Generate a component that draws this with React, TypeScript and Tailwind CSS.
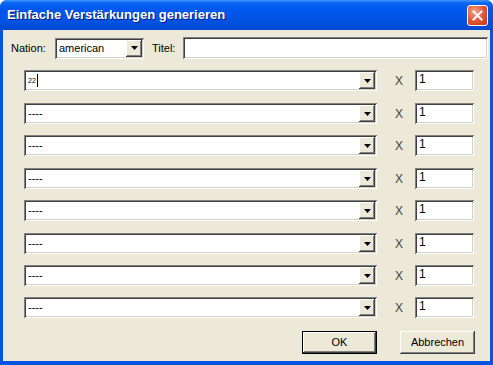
import React from 'react';

const sunken =
  'bg-white shadow-[inset_1px_1px_#808080,inset_-1px_-1px_#ffffff,inset_2px_2px_#404040,inset_-2px_-2px_#d4d0c8]';
const raised =
  'bg-[#ece9d8] shadow-[inset_-1px_-1px_#404040,inset_1px_1px_#ffffff,inset_-2px_-2px_#808080,inset_2px_2px_#ece9d8]';

// gaps between the eight rows (reference spacing is not perfectly even)
const rowGaps = ['mt-0', 'mt-[12px]', 'mt-[11px]', 'mt-[12px]', 'mt-[11px]', 'mt-[12px]', 'mt-[11px]', 'mt-[11px]'];

function Arrow() {
  return (
    <svg width="7" height="4" viewBox="0 0 7 4">
      <path d="M0 0h7L3.5 4z" fill="#000" />
    </svg>
  );
}

function Combo({ text, first, className }: { text: string; first?: boolean; className: string }) {
  return (
    <div className={`${sunken} ${className} h-[21px] flex items-center p-[2px]`}>
      <div className="flex-1 flex items-center pl-[2px] text-[11px] leading-none text-black">
        {first ? (
          <>
            <span className="text-[7px] leading-none">22</span>
            <span className="w-px h-[13px] bg-black ml-px" />
          </>
        ) : (
          <span>{text}</span>
        )}
      </div>
      <div className={`${raised} w-[16px] h-[17px] flex items-center justify-center`}>
        <Arrow />
      </div>
    </div>
  );
}

export default function App() {
  return (
    <div className="w-[493px] h-[365px] flex flex-col bg-[#0054e3] rounded-t-[7px] overflow-hidden font-['Liberation_Sans',Arial,sans-serif]">
      {/* Title bar */}
      <div className="h-[30px] shrink-0 flex items-center justify-between pl-[7px] pr-[5px] bg-[linear-gradient(#3d95ff_0px,#0a66ef_3px,#0058ee_8px,#0054e3_20px,#0048d0_30px)]">
        <span className="text-white font-bold text-[13px] [text-shadow:1px_1px_#0a1883]">
          Einfache Verstärkungen generieren
        </span>
        <div className="w-[21px] h-[21px] rounded-[3px] border border-white bg-[radial-gradient(circle_at_35%_30%,#f2a28a,#e0532d_55%,#c23a14)] flex items-center justify-center">
          <svg width="11" height="11" viewBox="0 0 11 11">
            <path d="M1.5 1.5l8 8M9.5 1.5l-8 8" stroke="#fff" strokeWidth="2" strokeLinecap="square" />
          </svg>
        </div>
      </div>

      {/* Body */}
      <div className="flex-1 mx-[3px] mb-[4px] bg-[#ece9d8] flex flex-col pr-[2px]">
        <div className="flex items-center mt-[7px] text-[11px] text-black">
          <span className="ml-[8px] w-[44px]">Nation:</span>
          <div className={`${sunken} w-[89px] h-[21px] flex items-center p-[2px]`}>
            <span className="flex-1 pl-[2px] leading-none">american</span>
            <div className={`${raised} w-[16px] h-[17px] flex items-center justify-center`}>
              <Arrow />
            </div>
          </div>
          <span className="ml-[8px] w-[31px]">Titel:</span>
          <div className={`${sunken} flex-1 h-[22px]`} />
        </div>

        <div className="flex flex-col mt-[11px]">
          {rowGaps.map((gap, i) => (
            <div key={i} className={`${gap} flex items-center text-[11px] text-black`}>
              <Combo text="----" first={i === 0} className="ml-[21px] w-[353px]" />
              <span className="ml-[18px] w-[20px] text-[12px] text-[#444]">X</span>
              <div className={`${sunken} w-[59px] h-[21px] pl-[4px] pt-[3px] text-[12px] leading-none text-black`}>1</div>
            </div>
          ))}
        </div>

        <div className="flex mt-[13px] text-[11px] text-black">
          <div className="ml-[299px] w-[75px] h-[23px] border border-black">
            <div className={`${raised} w-full h-full flex items-center justify-center`}>OK</div>
          </div>
          <div className={`${raised} ml-[23px] w-[75px] h-[23px] flex items-center justify-center`}>
            Abbrechen
          </div>
        </div>
      </div>
    </div>
  );
}
